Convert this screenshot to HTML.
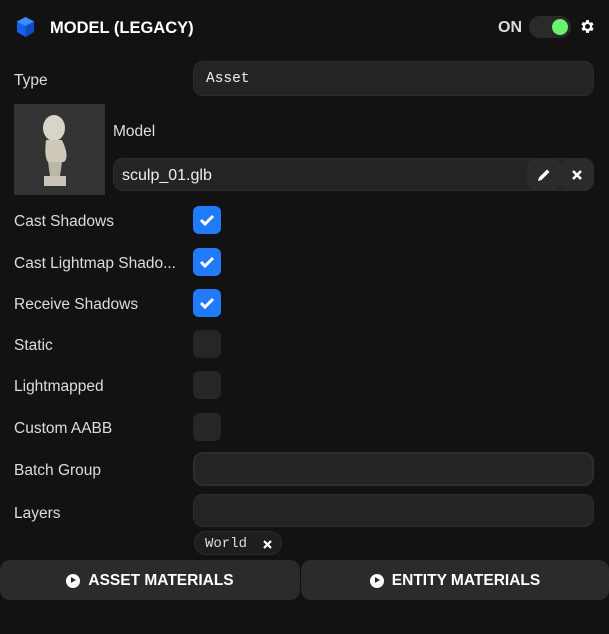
<!DOCTYPE html>
<html><head><style>
*{box-sizing:border-box;margin:0;padding:0}
body{width:609px;height:634px;background:#121212;font-family:"Liberation Sans",sans-serif;color:#ddd;position:relative;overflow:hidden}
.a{position:absolute}
.lbl{position:absolute;left:14px;font-size:15.5px;color:#ddd;line-height:20px;margin-top:2px}
.inp{position:absolute;background:#242424;border:1px solid #2c2c2c;border-radius:10px}
.cb{position:absolute;left:193px;width:28px;height:28px;border-radius:6px;background:#262626}
.cb.on{background:#1f7bfa}
.btn{position:absolute;top:560px;height:40px;background:#2b2b2b;border-radius:10px;color:#fff;font-weight:bold;font-size:15.5px;display:flex;align-items:center;justify-content:center;gap:8px;padding-top:1px}
.play{width:14px;height:14px;border-radius:50%;background:#fff;position:relative}
.play:after{content:"";position:absolute;left:5px;top:3.5px;border-left:5px solid #2b2b2b;border-top:3.5px solid transparent;border-bottom:3.5px solid transparent}
</style></head><body>
<svg class="a" style="left:17px;top:17px" width="17" height="20" viewBox="0 0 17 20"><path d="M8.5 0L17 4.5V15L8.5 20L0 15V4.5Z" fill="#1463e8"/><path d="M8.5 0L17 4.5L8.5 9L0 4.5Z" fill="#3d8bff"/><path d="M8.5 9V20L17 15V4.5Z" fill="#0b4fc7"/></svg>
<div class="a" style="left:50px;top:18px;font-size:16.5px;font-weight:bold;color:#fff;line-height:20px">MODEL (LEGACY)</div>
<div class="a" style="left:498px;top:18px;font-size:16px;font-weight:bold;color:#ddd;line-height:20px">ON</div>
<div class="a" style="left:529px;top:16px;width:42px;height:22px;border-radius:11px;background:#2a2a2a"></div>
<div class="a" style="left:552px;top:19px;width:16px;height:16px;border-radius:50%;background:#6cf46c"></div>
<svg class="a" style="left:579px;top:18px" width="17" height="17" viewBox="0 0 24 24"><path fill="#fff" d="M19.4 13a7.5 7.5 0 000-2l2.1-1.6-2-3.5-2.5 1a7.7 7.7 0 00-1.7-1L15 3h-4l-.4 2.6a7.7 7.7 0 00-1.7 1l-2.5-1-2 3.5L6.6 11a7.5 7.5 0 000 2l-2.1 1.6 2 3.5 2.5-1a7.7 7.7 0 001.7 1L11 21h4l.4-2.6a7.7 7.7 0 001.7-1l2.5 1 2-3.5zM13 15.5a3.5 3.5 0 110-7 3.5 3.5 0 010 7z" transform="translate(-1 0)"/></svg>

<div class="lbl" style="top:69px">Type</div>
<div class="inp" style="left:193px;top:61px;width:401px;height:35px"></div>
<div class="a" style="left:206px;top:71px;font-family:'Liberation Mono',monospace;font-size:14.5px;color:#eee">Asset</div>

<div class="a" style="left:14px;top:104px;width:91px;height:91px;background:#333"></div>
<svg class="a" style="left:34px;top:112px" width="40" height="76" viewBox="0 0 40 76"><ellipse cx="20" cy="16" rx="11" ry="13" fill="#d9d4c8"/><path d="M12 28Q10 45 14 50L30 50Q36 45 28 28Z" fill="#cfc9bc"/><path d="M14 50L28 50L26 64L16 64Z" fill="#bdb7aa"/><path d="M10 64H32V74H10Z" fill="#c9c3b7"/></svg>
<div class="lbl" style="left:113px;top:120px">Model</div>
<div class="inp" style="left:113px;top:158px;width:481px;height:33px"></div>
<div class="a" style="left:122px;top:167px;font-size:16px;color:#eee">sculp_01.glb</div>
<div class="a" style="left:527px;top:158px;width:34px;height:33px;background:#2b2b2b;border-radius:10px"></div>
<div class="a" style="left:561px;top:158px;width:33px;height:33px;background:#2b2b2b;border-radius:10px"></div>
<svg class="a" style="left:537px;top:168px" width="14" height="14" viewBox="0 0 14 14"><path d="M1 13L2 9.5L10 1.5L12.5 4L4.5 12Z" fill="#fff"/></svg>
<svg class="a" style="left:571px;top:169px" width="12" height="12" viewBox="0 0 12 12"><path d="M2 2L10 10M10 2L2 10" stroke="#fff" stroke-width="2.6"/></svg>

<div class="lbl" style="top:210px">Cast Shadows</div>
<div class="lbl" style="top:252px">Cast Lightmap Shado...</div>
<div class="lbl" style="top:293px">Receive Shadows</div>
<div class="lbl" style="top:334px">Static</div>
<div class="lbl" style="top:375px">Lightmapped</div>
<div class="lbl" style="top:417px">Custom AABB</div>
<div class="cb on" style="top:206px"></div>
<div class="cb on" style="top:248px"></div>
<div class="cb on" style="top:289px"></div>
<div class="cb" style="top:330px"></div>
<div class="cb" style="top:371px"></div>
<div class="cb" style="top:413px"></div>
<svg class="a" style="left:199px;top:213px" width="16" height="14" viewBox="0 0 16 14"><path d="M2 7L6 11L14 3" stroke="#fff" stroke-width="3" fill="none"/></svg>
<svg class="a" style="left:199px;top:255px" width="16" height="14" viewBox="0 0 16 14"><path d="M2 7L6 11L14 3" stroke="#fff" stroke-width="3" fill="none"/></svg>
<svg class="a" style="left:199px;top:296px" width="16" height="14" viewBox="0 0 16 14"><path d="M2 7L6 11L14 3" stroke="#fff" stroke-width="3" fill="none"/></svg>

<div class="lbl" style="top:459px">Batch Group</div>
<div class="inp" style="left:193px;top:452px;width:401px;height:34px;border:2px solid #2e2e2e"></div>
<div class="lbl" style="top:502px">Layers</div>
<div class="inp" style="left:193px;top:494px;width:401px;height:33px"></div>
<div class="a" style="left:194px;top:531px;width:88px;height:24px;border-radius:12px;background:#1e1e1e;border:1px solid #2c2c2c"></div>
<div class="a" style="left:205px;top:536px;font-family:'Liberation Mono',monospace;font-size:14px;color:#ddd">World</div>
<svg class="a" style="left:263px;top:540px" width="9" height="9" viewBox="0 0 9 9"><path d="M1 1L8 8M8 1L1 8" stroke="#fff" stroke-width="2.2"/></svg>

<div class="btn" style="left:0;width:300px"><span class="play"></span>ASSET MATERIALS</div>
<div class="btn" style="left:301px;width:308px"><span class="play"></span>ENTITY MATERIALS</div>
</body></html>
